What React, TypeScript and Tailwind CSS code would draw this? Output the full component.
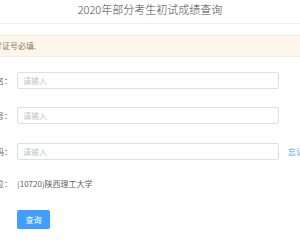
export default function App() {
  const fields = [
    { label: "姓名：", top: "mt-[15px]" },
    { label: "考生编号：", top: "mt-[18px]" },
    { label: "证件号码：", top: "mt-[19px]", link: "忘记考生编号?" },
  ];

  return (
    <div className="w-[300px] h-[240px] overflow-hidden bg-white text-[#606266] font-['Noto_Sans_CJK_SC','Liberation_Sans',sans-serif]">
      {/* Header */}
      <div className="h-[24px] border-b border-[#ebeef5] flex justify-center pt-[2px]">
        <span className="text-[11px] leading-[14px] text-[#4a4a4a] font-light">2020年部分考生初试成绩查询</span>
      </div>

      {/* Alert */}
      <div className="mt-[11px] h-[22px] bg-[#fdf6ec] border-y border-[#faecd8] flex items-center">
        <span className="ml-[-14px] text-[8px] text-[#8c7a5e] whitespace-nowrap">准考证号必填.</span>
      </div>

      {/* Form */}
      <div className="ml-[-62px] w-[400px] flex flex-col">
        {fields.map((f) => (
          <div key={f.label} className={`flex items-center ${f.top}`}>
            <label className="w-[74px] shrink-0 text-right text-[8px] whitespace-nowrap">{f.label}</label>
            <div className="ml-[5px] w-[262px] shrink-0 h-[17px] border border-[#dcdfe6] rounded-[2px] flex items-center px-[5px]">
              <span className="text-[8px] text-[#c0c4cc]">请输入</span>
            </div>
            {f.link && (
              <span className="ml-[9px] shrink-0 text-[8px] text-[#409eff] whitespace-nowrap">{f.link}</span>
            )}
          </div>
        ))}

        <div className="flex items-center mt-[18px]">
          <label className="w-[74px] shrink-0 text-right text-[8px] whitespace-nowrap">报考单位：</label>
          <span className="ml-[5px] text-[8px] text-[#606266] whitespace-nowrap">(10720)陕西理工大学</span>
        </div>

        <div className="flex mt-[20px]">
          <div className="w-[74px] shrink-0" />
          <button className="ml-[5px] w-[33px] h-[19px] rounded-[2px] bg-[#409eff] text-white text-[8px] flex items-center justify-center">
            查询
          </button>
        </div>
      </div>
    </div>
  );
}
